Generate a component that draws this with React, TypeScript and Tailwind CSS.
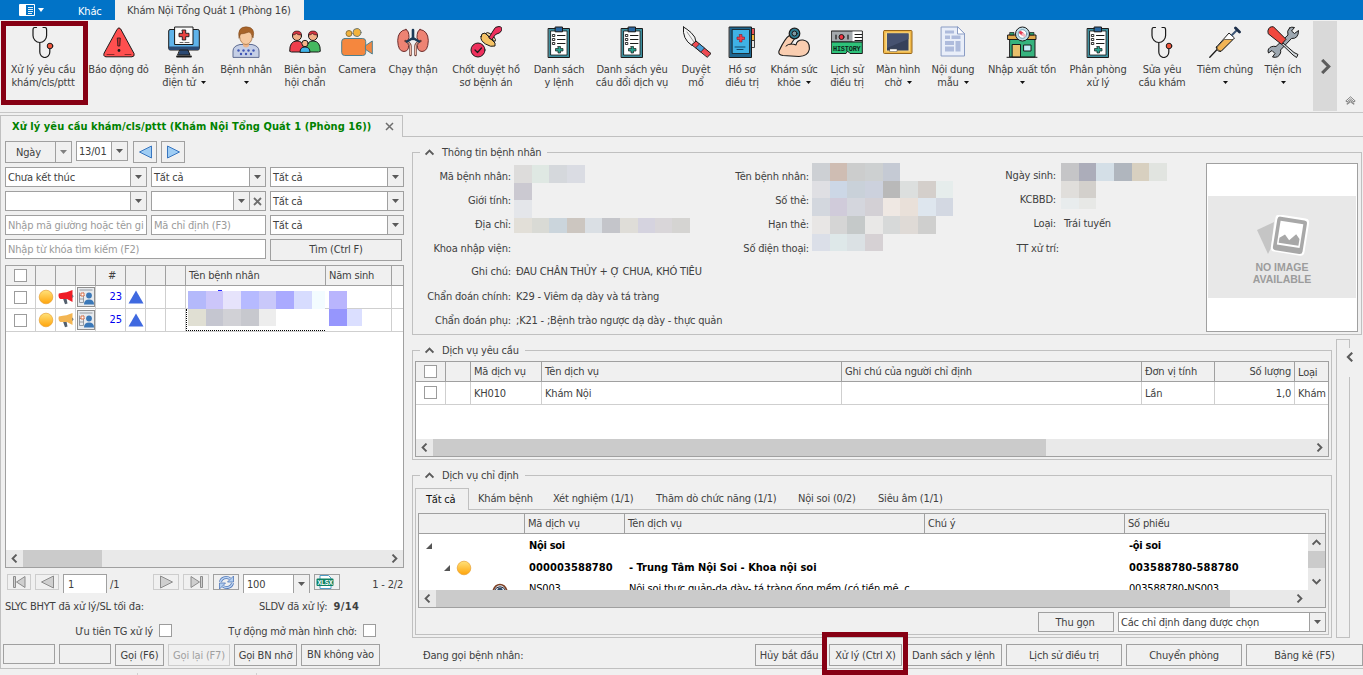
import React from "react";

type Kids = { children?: React.ReactNode };

const INK = "#1a1a1a";

/* ---------- ribbon icons (32x32) ---------- */

const Svg32 = ({ children }: Kids) => (
  <svg width="32" height="32" viewBox="0 0 32 32" fill="none" className="block shrink-0" strokeLinejoin="round" strokeLinecap="round">
    {children}
  </svg>
);

const Stethoscope = () => (
  <Svg32>
    <path d="M9.500 1.500H7.500Q6 1.500 6 4v5.500a6.800 7 0 0 0 13.600 0V4q0-2.500-1.500-2.500H16M12.800 16.500V26a5 5.500 0 0 0 10 0v-3" stroke={INK} strokeWidth="1.200" />
    <circle cx="23" cy="20" r="2.800" fill="#f0563c" stroke={INK} />
  </Svg32>
);

const Alarm = () => (
  <Svg32>
    <path d="M14.300 3Q16 .5 17.700 3L31 27.500q1 3-2 3.300H3Q0 30.500 1 27.500z" fill="#ff4f4f" stroke={INK} />
    <path d="M4 28.500h7M22 28.500h6" stroke="#8c2727" />
    <path d="M14.700 12h2.600l-.5 8h-1.600z" fill="#c93030" stroke={INK} strokeWidth=".8" />
    <circle cx="16" cy="24.500" r="1.400" fill={INK} />
  </Svg32>
);

const Monitor = () => (
  <Svg32>
    <rect x=".7" y="3.500" width="30.600" height="20.500" rx="1.500" fill="#5fb3ea" stroke={INK} />
    <path d="M1 20.500h30V24H1z" fill="#2c4a73" />
    <path d="M12 24h8l2 5H10z" fill="#2c4a73" stroke={INK} />
    <path d="M9 30.500h14" stroke={INK} strokeWidth="1.800" />
    <path d="M7 1h18v17.500H7z" fill="#fafafa" stroke={INK} />
    <path d="M14.300 4h3.400v3.300H21v3.400h-3.300V14h-3.400v-3.300H11V7.300h3.300z" fill="#e8433f" stroke={INK} strokeWidth=".9" />
    <path d="M12 16.500h3M17 16.500h4" stroke="#666" />
  </Svg32>
);

const Patient = () => (
  <Svg32>
    <path d="M3 31V25q0-5 7-6.500h12q7 1.500 7 6.500v6z" fill="#c5cfe6" stroke="#5e6c92" />
    <path d="M13 15h6v5q-3 3-6 0z" fill="#eeb58a" />
    <ellipse cx="16" cy="10.500" rx="6.300" ry="8" fill="#f6c9a0" stroke="#9a683a" strokeWidth=".7" />
    <path d="M9 12Q7 1 16 .8 26 1 23 12q-1-5-4-6-5 2-8.500 2z" fill="#a8642a" stroke="#7b4416" strokeWidth=".5" />
    <g fill="#3f56b5">
      {[9, 14, 19, 24].map((x) => <circle key={x} cx={x - 0.5} cy="24.500" r="1.200" />)}
      {[11.5, 16.5, 21.5].map((x) => <circle key={x} cx={x - 0.5} cy="28" r="1.200" />)}
    </g>
  </Svg32>
);

const Meeting = () => (
  <Svg32>
    <path d="M.7 25q-.2-10 7.300-10 5 0 6.500 5l-1 6H3z" fill="#ee3e4c" stroke={INK} />
    <path d="M31.300 25q.2-10-7.300-10-5 0-6.500 5l1 6H29z" fill="#44b860" stroke={INK} />
    <circle cx="8" cy="10" r="4.500" fill="#f2b088" stroke={INK} />
    <path d="M3.500 9q0-4 4.500-4t4.500 4q-4 0-5-1.500-1.500 1.500-4 1.500z" fill="#d33541" stroke={INK} strokeWidth=".6" />
    <circle cx="24" cy="10" r="4.500" fill="#f2b088" stroke={INK} />
    <path d="M19.500 9q0-4 4.500-4t4.500 4q-4 0-5-1.500-1.500 1.500-4 1.500z" fill="#d33541" stroke={INK} strokeWidth=".6" />
    <path d="M11 26q0-5 5-5t5 5z" fill="#3fb4ea" stroke={INK} />
    <circle cx="16" cy="17.500" r="3.200" fill="#f6b58b" stroke={INK} />
  </Svg32>
);

const Camera = () => (
  <Svg32>
    <circle cx="8" cy="7.500" r="3" fill="#f2b33c" stroke="#8b7440" />
    <circle cx="16" cy="6.500" r="4" fill="#f2b33c" stroke="#6f7a75" />
    <rect x=".7" y="12.500" width="24" height="17" rx="3" fill="#f5873e" stroke="#4d8091" />
    <path d="M24.700 19.500l6.600-4.500v13l-6.600-4.500z" fill="#f5873e" stroke="#4d8091" />
  </Svg32>
);

const Kidneys = () => (
  <Svg32>
    <path d="M9 3.500q-8 1-8.300 11Q1 25.500 7 25.500q5-.5 4.500-6-2.500-4 .5-8 0-7-3-8z" fill="#ee8373" stroke="#6b2c2c" />
    <path d="M23 3.500q8 1 8.300 11-.3 11-6.300 11-5-.5-4.500-6 2.500-4-.5-8 0-7 3-8z" fill="#ee8373" stroke="#6b2c2c" />
    <path d="M13.500 29V20q0-3-5-5M18.500 29V20q0-3 5-5" stroke="#6b3b33" strokeWidth="2.400" />
    <path d="M13.500 28.500V20q0-3-4-4.500M18.500 28.500V20q0-3 4-4.500" stroke="#f0b9a5" strokeWidth="1" />
    <path d="M16 4v9M16 12l-6 3.500M16 12l6 3.500" stroke="#1d3b57" strokeWidth="2.600" />
  </Svg32>
);

const Stamp = () => (
  <Svg32>
    <path d="M11 10.500q-1 4 4.500 7.500t9.500 2v-3L15 7q-4 0-4 3.500z" fill="#f5c265" stroke={INK} />
    <path d="M15.500 7.500l9.500 8q1.500-1.500-1-4.500L20 7.500q-3-2-4.500 0z" fill="#f8dda5" stroke={INK} />
    <path d="M19 11.500l4-6.500q2-5 6-4.500t2.500 4q-.5 2.500-6 4l-3.500 5z" fill="#ee2f5c" stroke={INK} />
    <circle cx="8" cy="24" r="7" fill="#ee2f5c" stroke={INK} />
    <path d="M5 24l2.500 2.500 4-4.500" stroke={INK} strokeWidth="1.200" />
  </Svg32>
);

const Clipboard = () => (
  <Svg32>
    <path d="M5.500 2.500h21v29h-21z" fill="#3e8f9e" stroke={INK} />
    <path d="M8 5h16v24H8z" fill="#fff" stroke={INK} strokeWidth=".8" />
    <path d="M12.500 1h7v4.800h-7z" fill="#2a66a0" stroke={INK} />
    <path d="M14.500 9.500H22M14.500 13.500H22M14.500 17.500H22" stroke={INK} strokeWidth="1.100" />
    <path d="M9.800 8.500h2v2h-2zM9.800 12.500h2v2h-2zM9.800 16.500h2v2h-2z" stroke={INK} strokeWidth=".9" />
    <path d="M15 20.500h2.500v2H20V25h-2.500v2H15v-2h-2.500v-2.500H15z" fill="#27a08c" stroke={INK} strokeWidth=".7" />
  </Svg32>
);

const Scalpel = () => (
  <Svg32>
    <path d="M3.500 1Q2 13 12 19.500l4-3.500q0-5-5-9.500Q7 3 3.500 1z" fill="#f4f4f4" stroke={INK} />
    <path d="M7 6l7 10" stroke="#999" />
    <path d="M12 18.500l4-3.500L31 27.500 27.500 31z" fill="#ee4a52" stroke={INK} />
    <path d="M16 21.500l3.500-3.500 5 4-3.500 3.800z" fill="#4a9fd8" stroke={INK} strokeWidth=".7" />
  </Svg32>
);

const Record = () => (
  <Svg32>
    <path d="M25 2.500h3.500v6H25z" fill="#e85458" stroke={INK} strokeWidth=".8" />
    <path d="M25 8.500h3.500v6H25z" fill="#f5b83d" stroke={INK} strokeWidth=".8" />
    <path d="M25 14.500h3.500v7H25z" fill="#e8e8e8" stroke={INK} strokeWidth=".8" />
    <path d="M3.500 1h22v30.500h-22z" fill="#1d6690" stroke={INK} />
    <path d="M6.500 3.500h17v24h-17z" fill="#3fb2e5" stroke={INK} strokeWidth=".8" />
    <path d="M13.500 8.500H16V11h2.500v2.500H16V16h-2.500v-2.500H11V11h2.500z" fill="#f03d4a" stroke="#7c1c2c" strokeWidth=".6" />
    <path d="M9 21h10M11 23.500h6" stroke="#12496b" />
  </Svg32>
);

const Arm = () => (
  <Svg32>
    <path d="M12 9Q7 12 1 25q-1 4 4 4.500l16 1q9-.5 10.300-7Q32 15 25 14q-6-.5-7 5-2-1-5-1l4-6z" fill="#f9cdb0" stroke={INK} strokeWidth="1.100" />
    <path d="M13 18q-3 0-5 2" stroke={INK} />
    <circle cx="16.500" cy="7.500" r="5.300" fill="#2e7d92" stroke={INK} strokeWidth="1.200" />
    <circle cx="16.500" cy="7.500" r="2.500" fill="#7f9aa3" stroke={INK} />
  </Svg32>
);

const History = () => (
  <Svg32>
    <path d="M.7 5h30.600v11H.7z" fill="#a4a9ad" stroke={INK} />
    <path d="M21.500 5.500h9.300v10h-9.300z" fill="#fff" />
    <path d="M24 8.500h7M24 11.500h7M24 14.500h7" stroke={INK} />
    <path d="M5 9v4M17 9v4" stroke={INK} strokeWidth="1.200" />
    <circle cx="10.500" cy="11" r="2.500" fill="#ef3340" stroke={INK} />
    <path d="M.7 16h30.600v11.500H19L16.500 25 15 27.500H.7z" fill="#2dc279" stroke={INK} />
    <text x="2" y="24.500" fontSize="7.200" fontWeight="900" textLength="27.500" lengthAdjust="spacingAndGlyphs" fill="#0d241a" fontFamily="Liberation Mono, monospace">HISTORY</text>
  </Svg32>
);

const Board = () => (
  <Svg32>
    <rect x="1.500" y="4.500" width="28.500" height="23" rx="1" fill="#f0b94a" stroke="#98661a" />
    <rect x="3.500" y="6.500" width="24.500" height="19" fill="#f8d98a" />
    <rect x="5" y="7.500" width="21.500" height="17" fill="#36415a" />
    <path d="M5 7.500h21.500V13L5 22z" fill="#465270" />
    <rect x="8" y="23" width="7" height="2.500" fill="#fff" stroke="#555" strokeWidth=".5" />
  </Svg32>
);

const Doc = () => (
  <Svg32>
    <path d="M4.500 1h16l7 7v22h-23z" fill="#e9eef9" stroke="#8a9cc4" />
    <path d="M20.500 1v7h7z" fill="#fff" stroke="#8a9cc4" />
    <path d="M8 4.500h9v3H8zM8 9.500h5v3.500H8zM14.500 9.500h9v3.500h-9zM8 15h9v4H8zM8 20.500h9v5H8zM18.500 15h5v10.500h-5z" fill="#aebbdc" />
  </Svg32>
);

const Pharmacy = () => (
  <Svg32>
    <path d="M4 13h25v18H4z" fill="#36b37e" stroke={INK} />
    <path d="M2 9h28v4.500H2z" fill="#dfa94c" stroke={INK} />
    <path d="M4 6.500h4V9H4zM24 6.500h4V9h-4z" fill="#2b9a68" stroke={INK} strokeWidth=".7" />
    <path d="M6.500 18.500h8V31h-8z" fill="#e7bf6b" stroke={INK} />
    <path d="M18 19h7v6h-7z" fill="#c5ecf7" stroke={INK} />
    <circle cx="16.500" cy="8" r="7" fill="#c2dfea" stroke={INK} />
    <circle cx="16.500" cy="8" r="4.300" fill="#fff" stroke="#4a7d96" strokeWidth=".7" />
    <path d="M14.500 6.500l2 1.500" stroke="#e63a52" strokeWidth="3" />
    <path d="M17 8.500l1.500 1" stroke="#f2b6be" strokeWidth="3" />
    <path d="M1 31.300h30" stroke={INK} />
  </Svg32>
);

const Syringe = () => (
  <Svg32>
    <path d="M.8 31.300l8-8.500" stroke={INK} strokeWidth="1.300" />
    <path d="M7.500 21L20 7l5.500 5L12 25.500q-5 0-4.500-4.500z" fill="#fff" stroke={INK} />
    <path d="M7.800 21.500l7.500-8h8.500L12 25q-4 0-4.200-3.500z" fill="#f2b455" stroke={INK} strokeWidth=".6" />
    <path d="M23 9l5-5" stroke="#3d5675" strokeWidth="2" />
    <path d="M26.500 2l4 4" stroke="#1d2f4a" strokeWidth="2.800" />
  </Svg32>
);

const Tools = () => (
  <Svg32>
    <path d="M22.500 2q-3 3-1.500 7L9 20.500q-5-1-7.500 2.500-1 2 0 4l3.500-2.500 3 3L5.500 31q6 1.500 8-4 .5-2 0-3L24.500 12.500q7 .5 7-8l-4 3-3-2.500 3-3.500q-3-1-5 .5z" fill="#9ea8b1" stroke={INK} />
    <path d="M16 17l11 9.500 4 2-1.500 3L26 29 15 18.500z" fill="#d4d9dd" stroke={INK} />
    <path d="M1 4.500Q2 0 6.500 .8l12.500 12.500-4.500 5L1.500 8z" fill="#f0483e" stroke={INK} />
  </Svg32>
);

type RibbonItem = { box: string; icon: () => React.ReactElement; a: string; b?: string; drop?: boolean };

const RIBBON: RibbonItem[] = [
  { box: "ml-[9px] w-[68px]", icon: Stethoscope, a: "Xử lý yêu cầu", b: "khám/cls/pttt" },
  { box: "ml-[10px] w-[63px]", icon: Alarm, a: "Báo động đỏ" },
  { box: "ml-[12px] w-[44px]", icon: Monitor, a: "Bệnh án", b: "điện tử", drop: true },
  { box: "ml-[13px] w-[54px]", icon: Patient, a: "Bệnh nhân", drop: true },
  { box: "ml-[10px] w-[44px]", icon: Meeting, a: "Biên bản", b: "hội chẩn" },
  { box: "ml-[10px] w-[40px]", icon: Camera, a: "Camera" },
  { box: "ml-[10px] w-[52px]", icon: Kidneys, a: "Chạy thận" },
  { box: "ml-[11px] w-[72px]", icon: Stamp, a: "Chốt duyệt hồ", b: "sơ bệnh án" },
  { box: "ml-[10px] w-[54px]", icon: Clipboard, a: "Danh sách", b: "y lệnh" },
  { box: "ml-[10px] w-[72px]", icon: Clipboard, a: "Danh sách yêu", b: "cầu đổi dịch vụ" },
  { box: "ml-[12px] w-[32px]", icon: Scalpel, a: "Duyệt", b: "mổ" },
  { box: "ml-[12px] w-[36px]", icon: Record, a: "Hồ sơ", b: "điều trị" },
  { box: "ml-[10px] w-[48px]", icon: Arm, a: "Khám sức", b: "khỏe", drop: true },
  { box: "ml-[11px] w-[36px]", icon: History, a: "Lịch sử", b: "điều trị" },
  { box: "ml-[10px] w-[46px]", icon: Board, a: "Màn hình", b: "chờ", drop: true },
  { box: "ml-[10px] w-[44px]", icon: Doc, a: "Nội dung", b: "mẫu", drop: true },
  { box: "ml-[11px] w-[72px]", icon: Pharmacy, a: "Nhập xuất tồn", drop: true },
  { box: "ml-[10px] w-[60px]", icon: Clipboard, a: "Phân phòng", b: "xử lý" },
  { box: "ml-[11px] w-[46px]", icon: Stethoscope, a: "Sửa yêu", b: "cầu khám" },
  { box: "ml-[12px] w-[56px]", icon: Syringe, a: "Tiêm chủng", drop: true },
  { box: "ml-[11px] w-[38px]", icon: Tools, a: "Tiện ích", drop: true },
];

/* ---------- small parts ---------- */

const Caret = ({ color = "#5a5a5a" }: { color?: string }) => (
  <svg width="7" height="4" viewBox="0 0 7 4" className="block shrink-0">
    <path d="M0 0h7L3.500 4z" fill={color} />
  </svg>
);

const Chevron = ({ turn = "", size = "h-[9px] w-[9px]" }: { turn?: string; size?: string }) => (
  <svg viewBox="0 0 9 9" className={`block shrink-0 ${size} ${turn}`} fill="none">
    <path d="M2.500 .6L6.400 4.500 2.500 8.400" stroke="#5c5c5c" strokeWidth="1.900" />
  </svg>
);

const Combo = ({ className, text = "", clear = false }: { className: string; text?: string; clear?: boolean }) => (
  <div className={`flex h-[20px] shrink-0 border border-[#a0a0a0] bg-white ${className}`}>
    <span className="flex-1 overflow-hidden pl-[2px] leading-[19px] whitespace-nowrap">{text}</span>
    <span className="flex w-[16px] items-center justify-center border-l border-[#a0a0a0] bg-[#f0f0f0]"><Caret /></span>
    {clear && (
      <span className="flex w-[16px] items-center justify-center border-l border-[#a0a0a0] bg-[#f0f0f0]">
        <svg width="9" height="9" viewBox="0 0 9 9"><path d="M1 1l7 7M8 1L1 8" stroke="#6e6e6e" strokeWidth="1.800" /></svg>
      </span>
    )}
  </div>
);

const Field = ({ className, hint }: { className: string; hint: string }) => (
  <div className={`h-[20px] shrink-0 overflow-hidden border border-[#a0a0a0] bg-white pl-[2px] leading-[19px] whitespace-nowrap text-[#9a9a9a] ${className}`}>{hint}</div>
);

const Button = ({ className, children }: Kids & { className: string }) => (
  <button className={`flex shrink-0 items-center justify-center border whitespace-nowrap ${className}`}>{children}</button>
);

const Check = ({ className = "" }: { className?: string }) => (
  <span className={`block h-[13px] w-[13px] shrink-0 border border-[#9c9c9c] bg-white ${className}`} />
);

const Group = ({ title, className, children }: Kids & { title: string; className: string }) => (
  <fieldset className={`min-w-0 shrink-0 border border-[#c0c0c0] ${className}`}>
    <legend className="ml-[7px] flex h-[14px] items-center pr-[6px] pl-[5px] leading-[14px]">
      <Chevron turn="-rotate-90" />
      <span className="ml-[8px] pt-[2px]">{title}</span>
    </legend>
    {children}
  </fieldset>
);

const HScroll = ({ thumb, className = "" }: { thumb: string; className?: string }) => (
  <div className={`flex h-[17px] shrink-0 items-center bg-[#e9e9e9] ${className}`}>
    <span className="flex w-[17px] shrink-0 justify-center"><Chevron turn="rotate-180" /></span>
    <span className={`h-full bg-[#cbcbcb] ${thumb}`} />
    <span className="flex-1" />
    <span className="flex w-[17px] shrink-0 justify-center"><Chevron /></span>
  </div>
);

const Ball = () => (
  <svg width="16" height="16" viewBox="0 0 16 16" className="block shrink-0">
    <defs>
      <linearGradient id="ball" x1="0" y1="0" x2="0" y2="1">
        <stop offset="0" stopColor="#ffe27a" /><stop offset="1" stopColor="#ffa40a" />
      </linearGradient>
    </defs>
    <circle cx="8" cy="8" r="6.800" fill="url(#ball)" stroke="#e8a030" strokeWidth=".7" />
  </svg>
);

const Horn = ({ color }: { color: string }) => (
  <svg width="16" height="16" viewBox="0 0 16 16" className="block shrink-0">
    <path d="M5 9.500h3.500l1 5-2.500.8z" fill="#53606e" />
    <path d="M.8 4.500q4-.8 7.700-1.200L14.500 1v12L9 10H2.500Q-.3 9 .8 4.500z" fill={color} />
    <path d="M14.300 5.500q2 1.500 0 3.500z" fill="#53606e" />
  </svg>
);

const CardIcon = () => (
  <svg width="18" height="20" viewBox="0 0 18 20" className="block shrink-0">
    <rect x=".5" y=".5" width="17" height="19" fill="#e8ebee" stroke="#8f8f8f" />
    <path d="M2.500 3h13M2.500 5.500v10M2.500 8.500h5M2.500 12h4M2.500 15.500h4M6.500 5.500v10" stroke="#7d8790" fill="none" strokeWidth=".8" />
    <path d="M4 6h3v3H4z" fill="#fff" stroke="#d9673a" strokeWidth=".9" />
    <circle cx="12" cy="8.500" r="2.900" fill="#3a78b8" />
    <path d="M7 17.500q0-5 5-5t5 5z" fill="#3a78b8" />
  </svg>
);

const Media = ({ kind, color }: { kind: "first" | "prev" | "next" | "last"; color: [string, string] }) => (
  <svg width="15" height="14" viewBox="0 0 15 14" className="block">
    <g fill={color[0]} stroke={color[1]} strokeWidth="1" strokeLinejoin="round">
      {kind === "first" && <><path d="M1.500 1.500h2v11h-2z" /><path d="M13 1.500v11L4.500 7z" /></>}
      {kind === "prev" && <path d="M13.500 1v12L1.500 7z" />}
      {kind === "next" && <path d="M1.500 1v12l12-6z" />}
      {kind === "last" && <><path d="M2 1.500v11L10.500 7z" /><path d="M11.500 1.500h2v11h-2z" /></>}
    </g>
  </svg>
);

const BLUE: [string, string] = ["#9fcdf4", "#3876c0"];
const GREY: [string, string] = ["#cfcfcf", "#8c8c8c"];

type Cell = [number, number, number, number, string];

const Mosaic = ({ className, cells, w, h }: { className: string; cells: Cell[]; w: number; h: number }) => (
  <svg width={w} height={h} viewBox={`0 0 ${w} ${h}`} className={`absolute ${className}`} shapeRendering="crispEdges">
    {cells.map(([x, y, cw, ch, c], i) => <rect key={i} x={x} y={y} width={cw} height={ch} fill={c} />)}
  </svg>
);

const strip = (edges: number[], y: number, h: number, colors: string[]): Cell[] =>
  colors.map((c, i) => [edges[i], y, edges[i + 1] - edges[i], h, c]);

const E = [0, 18, 35, 53, 71, 88, 106, 124, 141, 158, 176];

const PATIENT_CELLS: Cell[] = [
  ...strip([2, 20, 37, 55, 73, 90, 108, 126, 139], 1, 18, ["#b4b9fb", "#ccc6fa", "#e6e3fb", "#b6baff", "#c9c8fa", "#aaaaff", "#d7dcfe", "#f3fcff"]),
  ...strip([2, 20, 37, 55, 73, 90], 19, 17, ["#e0dfd3", "#c5c6d0", "#d1d1d6", "#c7c8ce", "#ededed"]),
  [32, 0, 4, 1, "#2a2aff"],
  [143, 1, 18, 18, "#b9b5fd"],
  [143, 19, 18, 17, "#9696fd"],
  [161, 19, 15, 17, "#dbdfff"],
];

const CODE_CELLS: Cell[] = [
  ...strip(E, 0, 18, ["#dddcdb", "#dfe8e3", "#d5d8dc", "#dadce3"]),
  [0, 18, 18, 17, "#cbc9d1"],
  [0, 35, 18, 18, "#e4e6ea"],
  ...strip(E, 53, 15, ["#e2dfd8", "#d9dad5", "#cbd5dc", "#ccc6c0", "#dadfe4", "#c4c5ca", "#dfddd8", "#d5d3df", "#d9d6d9", "#d5d4d2"]),
];

const NAME_CELLS: Cell[] = [
  ...strip(E, 0, 18, ["#cdd0d4", "#cfbdb3", "#cccdcd", "#cdd0d1", "#c5cad4"]),
  ...strip(E, 18, 17, ["#dfdfe3", "#ccd7e6", "#c9d1d9", "#ccd1dd", "#b9b9b9", "#dcdfde", "#d4cfcb", "#e6edec"]),
  ...strip(E, 35, 18, ["#d3d7de", "#d0cbda", "#d4d6dd", "#d3d0d5", "#efe8e3", "#e9e0d9", "#dee6ee", "#d3d8e2"]),
  ...strip(E, 53, 18, ["#e8e6e5", "#d5d5d5", "#c5c9c9", "#e9e8e7", "#d7d9d9", "#dfdad6", "#cfcfce"]),
  ...strip(E, 71, 17, ["#dbdfe8", "#dee8e9", "#dbe1e4", "#d6d1d4"]),
];

const BIRTH_CELLS: Cell[] = [
  ...strip(E, 0, 18, ["#c5c5c7", "#acadba", "#d4dfe7", "#b0b6be", "#d8d0c0", "#e1e4e0"]),
  ...strip(E, 18, 17, ["#e0dedb", "#d3d0cc"]),
  ...strip(E, 35, 11, ["#e8eced", "#e7e8e6"]),
];

const Row = ({ h = "h-[24px]", label, labelW, children }: Kids & { h?: string; label: string; labelW: string }) => (
  <div className={`flex items-center ${h}`}>
    <span className={`shrink-0 text-right ${labelW}`}>{label}</span>
    <span className="ml-[5px]">{children}</span>
  </div>
);

/* ---------- page sections ---------- */

const TitleBar = () => (
  <header className="flex h-[20px] shrink-0 bg-[#0173c7] text-white">
    <div className="flex w-[66px] items-center gap-[3px] pl-[19px]">
      <svg width="16" height="12" viewBox="0 0 16 12">
        <path d="M.5 .5h15v11H.5z" fill="none" stroke="#fff" />
        <path d="M1 1h6v10H1z" fill="#fff" />
        <path d="M9 3.500h5M9 5.500h5M9 7.500h5M9 9.500h4" stroke="#fff" strokeWidth=".9" />
      </svg>
      <svg width="6" height="4" viewBox="0 0 6 4"><path d="M0 0h6L3 4z" fill="#fff" /></svg>
    </div>
    <span className="w-[49px] pt-px pl-[12px] leading-[21px]">Khác</span>
    <span className="w-[189px] bg-[#f0f0f0] pt-px pl-[12px] leading-[20px] whitespace-nowrap text-[#404040]">Khám Nội Tổng Quát 1 (Phòng 16)</span>
  </header>
);

const Ribbon = () => (
  <div className="flex h-[93px] shrink-0 border-b border-[#c6c6c6]">
    {RIBBON.map(({ box, icon: Icon, a, b, drop }, i) => (
      <button key={i} className={`flex shrink-0 flex-col items-center pt-[6px] leading-[13px] whitespace-nowrap ${box}`}>
        <Icon />
        <span className="mt-[5px]">{a}</span>
        <span className="flex h-[13px] items-center justify-center gap-[5px]">
          {b}
          {drop && <svg width="5" height="3" viewBox="0 0 5 3" className="block"><path d="M0 0h5L2.500 3z" fill="#111" /></svg>}
        </span>
      </button>
    ))}
    <div className="mt-px ml-auto flex h-[90px] w-[24px] items-center justify-center bg-[#d9d9d9]">
      <Chevron size="h-[15px] w-[15px]" />
    </div>
    <div className="flex w-[26px] items-end justify-center pb-[7px]">
      <svg width="11" height="9" viewBox="0 0 11 9" fill="none" stroke="#777" strokeWidth=".9"><path d="M.8 5L5.500 .8l4.700 4.200-1.200 1L5.500 3 2 6zM2 8.300v-.8l3.500-3 3.500 3v.8L5.500 6z" /></svg>
    </div>
  </div>
);

const HEAD = "flex shrink-0 items-center border-r border-[#a0a0a0] pl-[3px]";
const CELL = "flex shrink-0 items-center border-r border-[#cfcfcf]";

const PatientGrid = () => (
  <div className="relative mt-[6px] flex h-[303px] w-[399px] shrink-0 flex-col border border-[#a0a0a0] bg-white">
    <div className="flex h-[20px] shrink-0 border-b border-[#a0a0a0] bg-[#f0f0f0]">
      <span className={`${HEAD} w-[30px] pl-[8px]`}><Check /></span>
      <span className={`${HEAD} w-[20px]`} />
      <span className={`${HEAD} w-[20px]`} />
      <span className={`${HEAD} w-[20px]`} />
      <span className={`${HEAD} w-[30px] justify-center pl-0`}>#</span>
      <span className={`${HEAD} w-[20px]`} />
      <span className={`${HEAD} w-[20px]`} />
      <span className={`${HEAD} w-[20px]`} />
      <span className={`${HEAD} w-[140px] pt-px`}>Tên bệnh nhân</span>
      <span className={`${HEAD} w-[66px]`}>Năm sinh</span>
    </div>
    {[["23", "#ee1c25"], ["25", "#f3b552"]].map(([n, color]) => (
      <div key={n} className="flex h-[23px] shrink-0 border-b border-[#cfcfcf]">
        <span className={`${CELL} w-[30px] pl-[8px]`}><Check /></span>
        <span className={`${CELL} w-[20px] justify-center`}><Ball /></span>
        <span className={`${CELL} w-[20px] justify-center`}><Horn color={color} /></span>
        <span className={`${CELL} w-[20px] justify-center`}><CardIcon /></span>
        <span className={`${CELL} w-[30px] justify-end pr-[3px] tracking-[-0.1px] text-[#0000f0]`}>{n}</span>
        <span className={`${CELL} w-[20px] justify-center`}>
          <svg width="16" height="14" viewBox="0 0 16 14"><path d="M8 .5L15.500 13.500H.5z" fill="#3f69e0" /></svg>
        </span>
        <span className={`${CELL} w-[20px]`} />
        <span className={`${CELL} w-[20px]`} />
        <span className={`${CELL} w-[140px] border-r-transparent`} />
        <span className={`${CELL} w-[66px]`} />
      </div>
    ))}
    <Mosaic className="top-[24px] left-[180px]" cells={PATIENT_CELLS} w={178} h={36} />
    <div className="absolute top-[43px] left-[180px] h-[22px] w-[139px] border-b border-l border-dotted border-black" />
    <div className="flex-1" />
    <HScroll thumb="w-[79px]" />
  </div>
);

const LeftPanel = () => (
  <aside className="flex w-[411px] shrink-0 flex-col pt-[4px] pl-[4px]">
    <div className="flex h-[22px] shrink-0">
      <div className="flex h-[22px] w-[67px] border border-[#a0a0a0]">
        <span className="w-[49px] pl-[10px] leading-[21px]">Ngày</span>
        <span className="flex flex-1 items-center justify-center border-l border-[#a0a0a0]"><Caret color="#808080" /></span>
      </div>
      <Combo className="ml-[4px] w-[52px]" text="13/01" />
      <Button className="ml-[5px] h-[22px] w-[24px] border-[#a0a0a0]"><Media kind="prev" color={BLUE} /></Button>
      <Button className="ml-[4px] h-[22px] w-[24px] border-[#a0a0a0]"><Media kind="next" color={BLUE} /></Button>
    </div>
    <div className="mt-[4px] flex h-[20px] shrink-0 gap-[4px]">
      <Combo className="w-[142px]" text="Chưa kết thúc" />
      <Combo className="w-[115px]" text="Tất cả" />
      <Combo className="w-[134px]" text="Tất cả" />
    </div>
    <div className="mt-[4px] flex h-[20px] shrink-0 gap-[4px]">
      <Combo className="w-[142px]" />
      <Combo className="w-[115px]" clear />
      <Combo className="w-[134px]" text="Tất cả" />
    </div>
    <div className="mt-[4px] flex h-[20px] shrink-0 gap-[4px]">
      <Field className="w-[142px]" hint="Nhập mã giường hoặc tên gi" />
      <Field className="w-[115px]" hint="Mã chỉ định (F3)" />
      <Combo className="w-[134px]" text="Tất cả" />
    </div>
    <div className="mt-[4px] flex h-[20px] shrink-0 gap-[4px]">
      <Field className="w-[261px]" hint="Nhập từ khóa tìm kiếm (F2)" />
      <Button className="h-[22px] w-[132px] border-[#a0a0a0]">Tìm (Ctrl F)</Button>
    </div>

    <PatientGrid />

    <div className="mt-[6px] flex h-[19px] shrink-0 pl-[2px]">
      <Button className="h-[16px] w-[24px] border-[#cdcdcd]"><Media kind="first" color={GREY} /></Button>
      <Button className="ml-[4px] h-[16px] w-[24px] border-[#cdcdcd]"><Media kind="prev" color={GREY} /></Button>
      <span className="ml-[4px] h-[19px] w-[44px] border-x border-t border-[#a0a0a0] bg-white pl-[4px] leading-[20px]">1</span>
      <span className="ml-[3px] w-[43px] leading-[21px]">/1</span>
      <Button className="h-[16px] w-[26px] border-[#cdcdcd]"><Media kind="next" color={GREY} /></Button>
      <Button className="ml-[4px] h-[16px] w-[26px] border-[#cdcdcd]"><Media kind="last" color={GREY} /></Button>
      <Button className="ml-[4px] h-[16px] w-[26px] border-[#a0a0a0]">
        <svg width="17" height="15" viewBox="0 0 17 15" fill="none">
          <path d="M2.500 7a5.800 5 0 0 1 9.500-3.300M14.500 8A5.800 5 0 0 1 5 11.300" stroke="#4f76b8" strokeWidth="2.800" />
          <path d="M2.500 7a5.800 5 0 0 1 9.500-3.300M14.500 8A5.800 5 0 0 1 5 11.300" stroke="#bcd4f2" strokeWidth="1.300" />
          <path d="M15.500 1v6h-6zM1.500 14V8h6z" fill="#b4cff0" stroke="#4f76b8" strokeWidth=".8" />
        </svg>
      </Button>
      <div className="ml-[4px] flex h-[19px] w-[67px] border-x border-t border-[#a0a0a0] bg-white">
        <span className="flex-1 pl-[3px] leading-[20px]">100</span>
        <span className="flex w-[16px] items-center justify-center border-l border-[#a0a0a0] bg-[#f0f0f0]"><Caret /></span>
      </div>
      <Button className="ml-[4px] h-[16px] w-[26px] border-[#a0a0a0]">
        <svg width="18" height="14" viewBox="0 0 18 14" className="mr-[4px] shrink-0">
          <path d="M4 .5h8.500L15 3v10.500H4z" fill="#fff" stroke="#4f9bc4" />
          <rect x="0.500" y="3.500" width="17" height="7.500" rx="1" fill="#0d8263" />
          <text x="1.500" y="9.700" fontSize="7" fontWeight="700" fill="#fff" textLength="15" lengthAdjust="spacingAndGlyphs" fontFamily="Liberation Sans, sans-serif">XLSX</text>
        </svg>
      </Button>
      <span className="w-[63px] text-right leading-[21px]">1 - 2/2</span>
    </div>
    <div className="mt-[6px] flex h-[14px] shrink-0 leading-[15px]">
      <span className="w-[254px]">SLYC BHYT đã xử lý/SL tối đa:</span>
      <span>SLDV đã xử lý:</span>
      <b className="ml-[6px] tracking-[0.4px]">9/14</b>
    </div>
    <div className="mt-[11px] flex h-[13px] shrink-0 leading-[15px]">
      <span className="w-[148px] text-right">Ưu tiên TG xử lý</span>
      <Check className="ml-[6px]" />
      <span className="w-[185px] text-right">Tự động mở màn hình chờ:</span>
      <Check className="ml-[6px]" />
    </div>
    <div className="mt-[7px] -ml-[2px] flex shrink-0 gap-[4px]">
      <Button className="h-[20px] w-[52px] border-[#a0a0a0]" />
      <Button className="h-[20px] w-[52px] border-[#a0a0a0]" />
      <Button className="h-[22px] w-[49px] border-[#a0a0a0] pt-px">Gọi (F6)</Button>
      <Button className="h-[22px] w-[62px] border-[#cdcdcd] pt-px text-[#a0a0a0]">Gọi lại (F7)</Button>
      <Button className="h-[22px] w-[63px] border-[#a0a0a0] pt-px">Gọi BN nhỡ</Button>
      <Button className="h-[22px] w-[79px] border-[#a0a0a0]">BN không vào</Button>
    </div>
  </aside>
);

const NoImage = () => (
  <div className="mt-[4px] h-[169px] w-[152px] shrink-0 border border-[#a0a0a0] bg-white px-px pt-[32px]">
    <div className="flex h-[102px] w-full flex-col items-center bg-[#e8e8e8] pt-[19px] font-['Liberation_Sans',sans-serif] text-[10.500px] leading-[11.500px] font-bold tracking-[0px] text-[#9c9c9c]">
      <svg width="54" height="42" viewBox="0 0 54 42" className="mb-[5px]">
        <path d="M2 15l17-8-3 26-3 6z" fill="#c5c5c5" />
        <g transform="rotate(9 36 20)">
          <rect x="18" y="1.500" width="34" height="37.500" rx="4" fill="#fff" />
          <rect x="20" y="3.500" width="30" height="34" rx="3" fill="#a8a8a8" />
          <rect x="23.500" y="7.500" width="23" height="24" fill="#fff" />
          <path d="M25 29.500v-5l5-4 5 5 6-7 4 4v7z" fill="#a8a8a8" />
        </g>
      </svg>
      <span>NO IMAGE</span>
      <span>AVAILABLE</span>
    </div>
  </div>
);

const PatientInfo = () => (
  <Group title="Thông tin bệnh nhân" className="relative h-[190px] w-[950px]">
    <div className="flex">
      <div className="w-[300px] pt-[6px] whitespace-nowrap">
        <Row label="Mã bệnh nhân:" labelW="w-[98px]" />
        <Row label="Giới tính:" labelW="w-[98px]" />
        <Row label="Địa chỉ:" labelW="w-[98px]" />
        <Row label="Khoa nhập viện:" labelW="w-[98px]" />
        <Row h="h-[22px]" label="Ghi chú:" labelW="w-[98px]">ĐAU CHÂN THỦY + Ợ CHUA, KHÓ TIÊU</Row>
        <Row h="h-[28px]" label="Chẩn đoán chính:" labelW="w-[98px]">K29 - Viêm dạ dày và tá tràng</Row>
        <Row h="h-[20px]" label="Chẩn đoán phụ:" labelW="w-[98px]">;K21 - ;Bệnh trào ngược dạ dày - thực quản</Row>
      </div>
      <div className="w-[247px] pt-[6px]">
        <Row label="Tên bệnh nhân:" labelW="w-[96px]" />
        <Row label="Số thẻ:" labelW="w-[96px]" />
        <Row label="Hạn thẻ:" labelW="w-[96px]" />
        <Row label="Số điện thoại:" labelW="w-[96px]" />
      </div>
      <div className="w-[246px] pt-[5px]">
        <Row label="Ngày sinh:" labelW="w-[96px]" />
        <Row label="KCBBD:" labelW="w-[96px]" />
        <Row label="Loại:" labelW="w-[96px]"><span className="pl-[3px]">Trái tuyến</span></Row>
        <Row h="h-[26px]" label="TT xử trí:" labelW="w-[99px]" />
      </div>
      <NoImage />
    </div>
    <Mosaic className="top-[6px] left-[101px]" cells={CODE_CELLS} w={176} h={68} />
    <Mosaic className="top-[4px] left-[399px]" cells={NAME_CELLS} w={141} h={88} />
    <Mosaic className="top-[4px] left-[648px]" cells={BIRTH_CELLS} w={106} h={46} />
  </Group>
);

const RequestedServices = () => (
  <Group title="Dịch vụ yêu cầu" className="h-[117px]">
    <div className="mt-[4px] ml-[2px] flex h-[96px] w-[914px] flex-col border border-[#a0a0a0] bg-white">
      <div className="flex h-[20px] shrink-0 border-b border-[#a0a0a0] bg-[#f0f0f0] whitespace-nowrap">
        <span className={`${HEAD} w-[30px] pl-[8px]`}><Check /></span>
        <span className={`${HEAD} w-[25px]`} />
        <span className={`${HEAD} w-[71px] pt-px`}>Mã dịch vụ</span>
        <span className={`${HEAD} w-[300px] pt-px`}>Tên dịch vụ</span>
        <span className={`${HEAD} w-[300px] pt-px`}>Ghi chú của người chỉ định</span>
        <span className={`${HEAD} w-[73px] pt-px`}>Đơn vị tính</span>
        <span className={`${HEAD} w-[80px] justify-end pt-px pr-[3px]`}>Số lượng</span>
        <span className="pl-[3px] leading-[21px]">Loại</span>
      </div>
      <div className="flex h-[23px] shrink-0 border-b border-[#cfcfcf] whitespace-nowrap">
        <span className={`${CELL} w-[30px] pb-px pl-[8px]`}><Check /></span>
        <span className={`${CELL} w-[25px]`} />
        <span className={`${CELL} w-[71px] pt-px pl-[3px]`}>KH010</span>
        <span className={`${CELL} w-[300px] pt-px pl-[3px]`}>Khám Nội</span>
        <span className={`${CELL} w-[300px]`} />
        <span className={`${CELL} w-[73px] pt-px pl-[3px]`}>Lần</span>
        <span className={`${CELL} w-[80px] justify-end pt-px pr-[3px]`}>1,0</span>
        <span className="pl-[3px] leading-[23px]">Khám</span>
      </div>
      <div className="flex-1" />
      <HScroll thumb="w-[613px]" />
    </div>
  </Group>
);

const Expander = () => (
  <svg width="6" height="6" viewBox="0 0 6 6" className="block shrink-0"><path d="M6 0v6H0z" fill="#555" /></svg>
);

const OrderedServices = () => (
  <Group title="Dịch vụ chỉ định" className="mt-[8px] h-[170px]">
    <div className="mt-[6px] ml-[2px] w-[914px]">
      <div className="flex h-[21px] leading-[22px] whitespace-nowrap">
        <span className="z-10 h-[22px] w-[54px] shrink-0 border-x border-t border-[#c0c0c0] bg-[#f0f0f0] pl-[10px] leading-[21px] text-[#111]">Tất cả</span>
        <span className="ml-[9px] w-[75px] shrink-0">Khám bệnh</span>
        <span className="w-[103px] shrink-0">Xét nghiệm (1/1)</span>
        <span className="w-[142px] shrink-0">Thăm dò chức năng (1/1)</span>
        <span className="w-[80px] shrink-0">Nội soi (0/2)</span>
        <span>Siêu âm (1/1)</span>
      </div>
      <div className="h-[126px] border border-[#c0c0c0] pt-[3px] pl-[2px]">
        <div className="flex h-[95px] w-[908px] flex-col border border-[#a0a0a0] bg-white text-black">
          <div className="flex h-[20px] shrink-0 border-b border-[#a0a0a0] bg-[#f0f0f0] text-[#404040]">
            <span className={`${HEAD} w-[106px]`} />
            <span className={`${HEAD} w-[100px]`}>Mã dịch vụ</span>
            <span className={`${HEAD} w-[300px]`}>Tên dịch vụ</span>
            <span className={`${HEAD} w-[200px]`}>Chú ý</span>
            <span className="flex items-center pl-[3px]">Số phiếu</span>
          </div>
          <div className="flex min-h-0 flex-1">
            <div className="flex flex-1 flex-col overflow-hidden whitespace-nowrap">
              <div className="flex h-[22px] shrink-0 items-center pt-px font-bold">
                <span className="w-[110px] pl-[7px]"><Expander /></span>
                <span className="w-[600px] tracking-[-0.3px]">Nội soi</span>
                <span className="tracking-[-0.3px]">-ội soi</span>
              </div>
              <div className="flex h-[22px] shrink-0 items-center pt-px font-bold">
                <span className="flex w-[110px] items-center gap-[6px] pl-[25px]"><Expander /><Ball /></span>
                <span className="w-[100px] tracking-[0.100px]">000003588780</span>
                <span className="w-[500px] tracking-[0px]">- Trung Tâm Nội Soi - Khoa nội soi</span>
                <span className="tracking-[0.150px]">003588780-588780</span>
              </div>
              <div className="flex h-[22px] shrink-0 items-center">
                <span className="w-[110px] pt-px pl-[73px]">
                  <svg width="16" height="16" viewBox="0 0 16 16" className="block">
                    <path d="M1 9Q3 2.500 8 2.500T15 9q-3 5-7 5T1 9z" fill="#dfe9f2" stroke="#7d3f22" strokeWidth="1.600" />
                    <path d="M2.500 8.500Q4 4.800 8 4.800t5.500 3.700" fill="none" stroke="#2a2a3a" strokeWidth="1" />
                    <circle cx="8" cy="8.500" r="2.800" fill="#2c4967" />
                  </svg>
                </span>
                <span className="w-[100px]">NS003</span>
                <span className="w-[500px]">Nội soi thực quản-dạ dày- tá tràng ống mềm (có tiền mê, c</span>
                <span>003588780-NS003</span>
              </div>
            </div>
            <div className="flex w-[17px] shrink-0 flex-col items-center bg-[#e9e9e9]">
              <span className="flex h-[17px] shrink-0 items-center"><Chevron turn="-rotate-90" /></span>
              <span className="h-[17px] w-full shrink-0 bg-[#cbcbcb]" />
              <span className="mt-[5px] flex h-[17px] shrink-0 items-center"><Chevron turn="rotate-90" /></span>
            </div>
          </div>
          <div className="flex bg-[#e9e9e9]">
            <HScroll className="flex-1" thumb="w-[794px]" />
            <span className="w-[17px]" />
          </div>
        </div>
        <div className="mt-[4px] flex justify-end pr-[2px]">
          <Button className="h-[20px] w-[76px] border-[#a0a0a0] pt-px pr-[2px]">Thu gọn</Button>
          <Combo className="ml-[4px] w-[208px]" text="Các chỉ định đang được chọn" />
        </div>
      </div>
    </div>
  </Group>
);

const Workspace = () => (
  <main className="flex min-w-0 flex-1 flex-col pt-[8px]">
    <PatientInfo />
    <div className="flex h-[303px] shrink-0">
      <div className="w-[920px] shrink-0 pt-[8px]">
        <RequestedServices />
        <OrderedServices />
      </div>
      <div className="mt-[4px] ml-[4px] flex h-[299px] w-[27px] border-l border-[#c0c0c0]">
        <div className="flex w-[13px] flex-col">
          <div className="h-[9px] border-t border-r border-[#c0c0c0]" />
          <div className="h-[29px]"><div className="ml-[8px] pt-[4px]"><Chevron turn="rotate-180" size="h-[10px] w-[10px]" /></div></div>
          <div className="flex-1 border-r border-b border-[#c0c0c0]" />
        </div>
      </div>
    </div>
    <div className="mt-[6px] flex h-[22px] shrink-0 whitespace-nowrap">
      <span className="w-[343px] shrink-0 pl-[11px] leading-[23px]">Đang gọi bệnh nhân:</span>
      <Button className="h-[22px] w-[70px] border-[#a0a0a0] pt-px pr-[2px]">Hủy bắt đầu</Button>
      <Button className="ml-[4px] h-[22px] w-[73px] border-[#a0a0a0] pt-px">Xử lý (Ctrl X)</Button>
      <Button className="ml-[3px] h-[22px] w-[97px] border-[#a0a0a0] pt-px">Danh sách y lệnh</Button>
      <Button className="ml-[4px] h-[22px] w-[116px] border-[#a0a0a0] pt-px">Lịch sử điều trị</Button>
      <Button className="ml-[4px] h-[22px] w-[116px] border-[#a0a0a0] pt-px">Chuyển phòng</Button>
      <Button className="ml-[4px] h-[22px] w-[117px] border-[#a0a0a0] pt-px">Bảng kê (F5)</Button>
    </div>
  </main>
);

export default function App() {
  return (
    <div className="relative flex h-[675px] w-[1363px] flex-col overflow-hidden bg-[#f0f0f0] font-['DejaVu_Sans_Condensed','DejaVu_Sans',sans-serif] text-[11px] leading-[14px] tracking-[-0.19px] text-[#404040]">
      <TitleBar />
      <Ribbon />
      <div className="mt-[2px] flex h-[22px] shrink-0">
        <div className="flex w-[403px] items-center border-x border-t border-[#c0c0c0] pl-[11px] font-bold tracking-[0.07px] whitespace-nowrap text-[#008200]">
          <span className="w-[373px] shrink-0">Xử lý yêu cầu khám/cls/pttt (Khám Nội Tổng Quát 1 (Phòng 16))</span>
          <svg width="9" height="9" viewBox="0 0 9 9"><path d="M1 1l7 7M8 1L1 8" stroke="#6e6e6e" strokeWidth="1.500" /></svg>
        </div>
        <div className="flex-1 border-b border-[#c0c0c0]" />
      </div>
      <div className="flex h-[532px] shrink-0 border-b border-l border-[#c0c0c0]">
        <LeftPanel />
        <Workspace />
      </div>
      <div className="flex h-[6px] shrink-0 items-end">
        <span className="ml-[137px] h-[2px] w-px bg-[#d0d0d0]" />
        <span className="ml-[118px] h-[2px] w-px bg-[#d0d0d0]" />
      </div>

      <div className="absolute top-[21px] left-[1px] h-[84px] w-[87px] border-[5px] border-[#870014]" />
      <div className="absolute top-[632px] left-[822px] h-[43px] w-[86px] border-[5px] border-[#870014]" />
    </div>
  );
}
